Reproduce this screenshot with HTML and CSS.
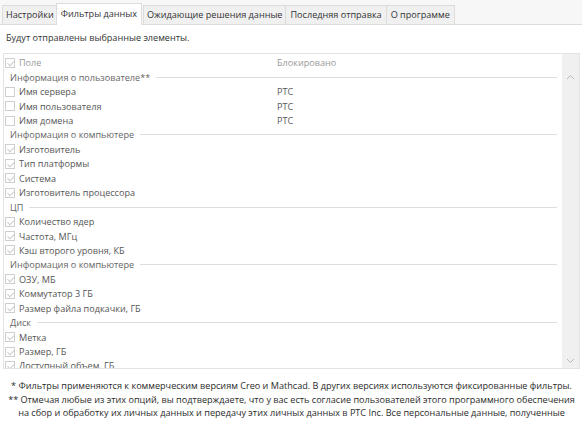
FILE: index.html
```html
<!DOCTYPE html>
<html lang="ru">
<head>
<meta charset="utf-8">
<link rel="stylesheet" href="styles.css">
</head>
<body>
<div class="window">
  <div class="tabs">
    <div class="tab">Настройки</div>
    <div class="tab active">Фильтры данных</div>
    <div class="tab">Ожидающие решения данные</div>
    <div class="tab">Последняя отправка</div>
    <div class="tab">О программе</div>
  </div>
  <div class="panel">
    <div class="intro">Будут отправлены выбранные элементы.</div>
    <div class="grid">
      <div class="rows">
        <div class="row head"><span class="cb on"></span><span class="name">Поле</span><span class="val">Блокировано</span></div>
        <div class="group"><span>Информация о пользователе**</span><i></i></div>
        <div class="row"><span class="cb"></span><span class="name">Имя сервера</span><span class="val">PTC</span></div>
        <div class="row"><span class="cb"></span><span class="name">Имя пользователя</span><span class="val">PTC</span></div>
        <div class="row"><span class="cb"></span><span class="name">Имя домена</span><span class="val">PTC</span></div>
        <div class="group"><span>Информация о компьютере</span><i></i></div>
        <div class="row"><span class="cb on"></span><span class="name">Изготовитель</span></div>
        <div class="row"><span class="cb on"></span><span class="name">Тип платформы</span></div>
        <div class="row"><span class="cb on"></span><span class="name">Система</span></div>
        <div class="row"><span class="cb on"></span><span class="name">Изготовитель процессора</span></div>
        <div class="group"><span>ЦП</span><i></i></div>
        <div class="row"><span class="cb on"></span><span class="name">Количество ядер</span></div>
        <div class="row"><span class="cb on"></span><span class="name">Частота, МГц</span></div>
        <div class="row"><span class="cb on"></span><span class="name">Кэш второго уровня, КБ</span></div>
        <div class="group"><span>Информация о компьютере</span><i></i></div>
        <div class="row"><span class="cb on"></span><span class="name">ОЗУ, МБ</span></div>
        <div class="row"><span class="cb on"></span><span class="name">Коммутатор 3 ГБ</span></div>
        <div class="row"><span class="cb on"></span><span class="name">Размер файла подкачки, ГБ</span></div>
        <div class="group"><span>Диск</span><i></i></div>
        <div class="row"><span class="cb on"></span><span class="name">Метка</span></div>
        <div class="row"><span class="cb on"></span><span class="name">Размер, ГБ</span></div>
        <div class="row"><span class="cb on"></span><span class="name">Доступный объем, ГБ</span></div>
      </div>
      <div class="scroll">
        <svg class="arrow" width="9" height="6" viewBox="0 0 9 6"><path d="M1 5 L4.5 1.5 L8 5" fill="none" stroke="#b8b8b8" stroke-width="1"/></svg>
        <svg class="arrow" width="9" height="6" viewBox="0 0 9 6"><path d="M1 1 L4.5 4.5 L8 1" fill="none" stroke="#b8b8b8" stroke-width="1"/></svg>
      </div>
    </div>
    <div class="notes">
      <p>* Фильтры применяются к коммерческим версиям Creo и Mathcad. В других версиях используются фиксированные фильтры.</p>
      <p>** Отмечая любые из этих опций, вы подтверждаете, что у вас есть согласие пользователей этого программного обеспечения на сбор и обработку их личных данных и передачу этих личных данных в PTC Inc. Все персональные данные, полученные компанией PTC, обрабатываются в соответствии с Политикой конфиденциальности PTC.</p>
    </div>
  </div>
</div>
</body>
</html>
```
FILE: styles.css
```css
* { box-sizing: border-box; }
html, body { margin: 0; padding: 0; background: #fff; }
body {
  font-family: "Open Sans", "Noto Sans", sans-serif;
  font-size: 9.1px;
  color: #333;
  width: 582px;
  height: 422px;
  overflow: hidden;
}
.window { display: flex; flex-direction: column; height: 100%; }
.tabs {
  display: flex;
  align-items: flex-end;
  padding: 4px 0 0 2px;
  background: #f7f7f7;
  border-bottom: 1px solid #dcdcdc;
  height: 25px;
}
.tab {
  height: 19px;
  line-height: 17px;
  padding: 0 3px;
  background: #f0f0f0;
  border: 1px solid #dcdcdc;
  border-bottom: none;
  margin-right: -1px;
  color: #333;
  white-space: nowrap;
}
.tab:nth-child(4), .tab:nth-child(5) { padding: 0 4px; }
.tab.active {
  height: 22px;
  line-height: 20px;
  background: #fff;
  padding: 0 4px;
  margin: 0 1px -1px -1px;
  position: relative;
}
.panel { flex: 1; display: flex; flex-direction: column; padding: 0 2px 0 3px; }
.intro { height: 28px; line-height: 26px; padding: 0 0 0 3px; color: #333; }
.grid {
  display: flex;
  height: 316px;
  border: 1px solid #e3e3e3;
  overflow: hidden;
}
.rows { flex: 1; overflow: hidden; padding-top: 1px; }
.row {
  display: flex;
  align-items: center;
  height: 14.45px;
  color: #555;
  white-space: nowrap;
}
.row.head { color: #999; height: 15px; }
.cb {
  width: 10px;
  height: 10px;
  border: 1px solid #cfcfcf;
  margin: 0 4px 0 1px;
  flex: none;
  position: relative;
}
.cb.on::after {
  content: "";
  position: absolute;
  left: 3px;
  top: 0px;
  width: 3px;
  height: 6px;
  border: solid #cdcdcd;
  border-width: 0 1px 1px 0;
  transform: rotate(45deg);
}
.name { width: 258px; }
.val { color: #555; }
.row.head .val { color: #999; }
.group {
  display: flex;
  align-items: center;
  height: 14.45px;
  padding-left: 6px;
  color: #666;
  white-space: nowrap;
  padding-right: 5px;
}
.group i {
  flex: 1;
  height: 1px;
  background: #dedede;
  margin-left: 6px;
}
.scroll {
  width: 17px;
  flex: none;
  background: #f0f0f0;
  display: flex;
  flex-direction: column;
  justify-content: space-between;
  align-items: center;
  padding: 20px 0 4px;
}
.notes {
  padding: 10px 0 0;
  text-align: center;
  color: #2a2a2a;
  line-height: 13.5px;
}
.notes p { margin: 0; }
```
